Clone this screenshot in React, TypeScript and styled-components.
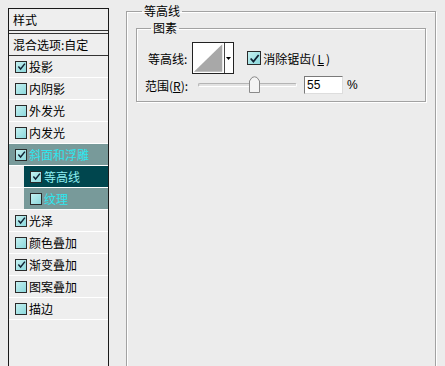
import React from "react";
import styled, { createGlobalStyle } from "styled-components";

const GlobalStyle = createGlobalStyle`
    html, body {
        margin: 0;
        padding: 0;
        background: #ececec;
        overflow: hidden;
    }
    body {
        font-family: "Noto Sans CJK SC", "Noto Sans", sans-serif;
        font-size: 12px;
        color: #000;
    }
`;

const Page = styled.div`
    display: flex;
    align-items: flex-start;
    width: 445px;
    height: 366px;
    overflow: hidden;
`;

const StylePanel = styled.div`
    margin: 8px 0 0 8px;
    width: 99px;
    height: 380px;
    border: 1px solid #1a1a1a;
    background: #eeeeee;
    display: flex;
    flex-direction: column;
`;

const PanelHeader = styled.div`
    height: 21px;
    line-height: 21px;
    padding-left: 4px;
    border-bottom: 4px double #333;
`;

const BlendRow = styled.div`
    height: 21px;
    line-height: 21px;
    padding-left: 4px;
    border-bottom: 1px solid #333;
`;

type RowKind = "normal" | "selected" | "active" | "sub";

const rowBg: Record<RowKind, string> = {
    normal: "transparent",
    selected: "#789a9a",
    active: "#00464e",
    sub: "#789a9a",
};

const rowColor: Record<RowKind, string> = {
    normal: "#000",
    selected: "#2ee6ee",
    active: "#8ff0f2",
    sub: "#2ee6ee",
};

const RowOuter = styled.div<{ $indent: boolean }>`
    height: 21px;
    padding-left: ${(p) => (p.$indent ? "15px" : "0")};
    border-bottom: 1px solid #fff;
    display: flex;
`;

const RowInner = styled.div<{ $kind: RowKind }>`
    flex: 1;
    display: flex;
    align-items: center;
    gap: 2px;
    padding-left: 6px;
    background: ${(p) => rowBg[p.$kind]};
    color: ${(p) => rowColor[p.$kind]};
    white-space: nowrap;
`;

const Box = styled.span<{ $size?: number }>`
    width: ${(p) => p.$size ?? 10}px;
    height: ${(p) => p.$size ?? 10}px;
    border: 1px solid #2a2a2a;
    background: linear-gradient(135deg, #c4f0f0, #8cd8dc);
    display: inline-flex;
    align-items: center;
    justify-content: center;
    flex-shrink: 0;
`;

const Check = ({ checked, size }: { checked?: boolean; size?: number }) => (
    <Box $size={size}>
        {checked && (
            <svg width={(size ?? 10) - 1} height={(size ?? 10) - 1} viewBox="0 0 10 10">
                <path d="M1.5 5 L4 7.8 L8.8 1.8" fill="none" stroke="#123" strokeWidth="1.6" />
            </svg>
        )}
    </Box>
);

const layers: { label: string; checked?: boolean; kind?: RowKind }[] = [
    { label: "投影", checked: true },
    { label: "内阴影" },
    { label: "外发光" },
    { label: "内发光" },
    { label: "斜面和浮雕", checked: true, kind: "selected" },
    { label: "等高线", checked: true, kind: "active" },
    { label: "纹理", kind: "sub" },
    { label: "光泽", checked: true },
    { label: "颜色叠加" },
    { label: "渐变叠加", checked: true },
    { label: "图案叠加" },
    { label: "描边" },
];

const GroupBox = styled.fieldset<{ $width: number }>`
    margin: 0;
    width: ${(p) => p.$width}px;
    box-sizing: border-box;
    border: 1px solid #a2a2a2;
    box-shadow: inset 1px 1px 0 #fff, 1px 1px 0 #fff;
    padding: 0;
    min-width: 0;
`;

const OuterGroup = styled(GroupBox)`
    margin: 4px 0 0 17px;
    height: 400px;
    padding: 3px 9px 0 9px;
`;

const InnerGroup = styled(GroupBox)`
    padding: 7px 0 7px 8px;
`;

const Legend = styled.legend<{ $offset: number }>`
    margin-left: ${(p) => p.$offset}px;
    padding: 0 2px;
    line-height: 14px;
    font-size: 12px;
`;

const FieldRow = styled.div<{ $gap?: number }>`
    display: flex;
    align-items: center;
    margin-top: ${(p) => p.$gap ?? 0}px;
`;

const Label = styled.span<{ $shift?: number }>`
    margin-left: ${(p) => p.$shift ?? 0}px;
    white-space: nowrap;
`;

const U = styled.span`
    text-decoration: underline;
`;

const ContourPicker = styled.div`
    margin-left: 5px;
    width: 40px;
    height: 30px;
    border: 1px solid #222;
    background: #fff;
    display: flex;
`;

const ContourDrop = styled.div`
    width: 9px;
    border-left: 1px solid #444;
    display: flex;
    align-items: center;
    justify-content: center;
`;

const AntiAlias = styled.label`
    margin-left: 13px;
    display: flex;
    align-items: center;
    gap: 2px;
`;

const Track = styled.div`
    position: relative;
    margin-left: 10px;
    width: 99px;
    height: 4px;
    border-radius: 2px;
    border: 1px solid #b4b4b4;
    border-bottom-color: #fff;
    border-right-color: #fff;
    background: #e2e2e2;
    box-sizing: border-box;
`;

const Thumb = styled.svg`
    position: absolute;
    left: 50px;
    top: -8px;
`;

const NumberInput = styled.div`
    margin-left: 7px;
    width: 35px;
    height: 16px;
    border: 1px solid #7a7a7a;
    border-right-color: #ddd;
    border-bottom-color: #ddd;
    background: #fff;
    line-height: 16px;
    padding-left: 2px;
    box-sizing: content-box;
    font-family: "Liberation Sans", Arial, sans-serif;
    font-size: 12px;
`;

const Percent = styled.span`
    margin-left: 4px;
    font-family: "Liberation Sans", Arial, sans-serif;
`;

export default function App() {
    return (
        <>
            <GlobalStyle />
            <Page>
                <StylePanel>
                    <PanelHeader>样式</PanelHeader>
                    <BlendRow>混合选项:自定</BlendRow>
                    {layers.map((l) => {
                        const kind = l.kind ?? "normal";
                        return (
                            <RowOuter key={l.label} $indent={kind === "active" || kind === "sub"}>
                                <RowInner $kind={kind}>
                                    <Check checked={l.checked} />
                                    {l.label}
                                </RowInner>
                            </RowOuter>
                        );
                    })}
                </StylePanel>
                <OuterGroup $width={310}>
                    <Legend $offset={6}>等高线</Legend>
                    <InnerGroup $width={290}>
                        <Legend $offset={6}>图素</Legend>
                        <FieldRow>
                            <Label $shift={3}>等高线:</Label>
                            <ContourPicker>
                                <svg width="31" height="30" viewBox="0 0 31 30">
                                    <polygon points="1,29 30,1 30,29" fill="#a8a8a8" />
                                </svg>
                                <ContourDrop>
                                    <svg width="5" height="3" viewBox="0 0 5 3">
                                        <polygon points="0,0 5,0 2.5,3" fill="#000" />
                                    </svg>
                                </ContourDrop>
                            </ContourPicker>
                            <AntiAlias>
                                <Check checked size={12} />
                                消除锯齿(<U>L</U>)
                            </AntiAlias>
                        </FieldRow>
                        <FieldRow $gap={2}>
                            <Label>
                                范围(<U>R</U>):
                            </Label>
                            <Track>
                                <Thumb width="11" height="17" viewBox="0 0 11 17">
                                    <path d="M0.5 16.5 V5 L3 1.5 Q5.5 0 8 1.5 L10.5 5 V16.5 Z" fill="#f4f4f4" stroke="#8a8a8a" />
                                </Thumb>
                            </Track>
                            <NumberInput>55</NumberInput>
                            <Percent>%</Percent>
                        </FieldRow>
                    </InnerGroup>
                </OuterGroup>
            </Page>
        </>
    );
}
